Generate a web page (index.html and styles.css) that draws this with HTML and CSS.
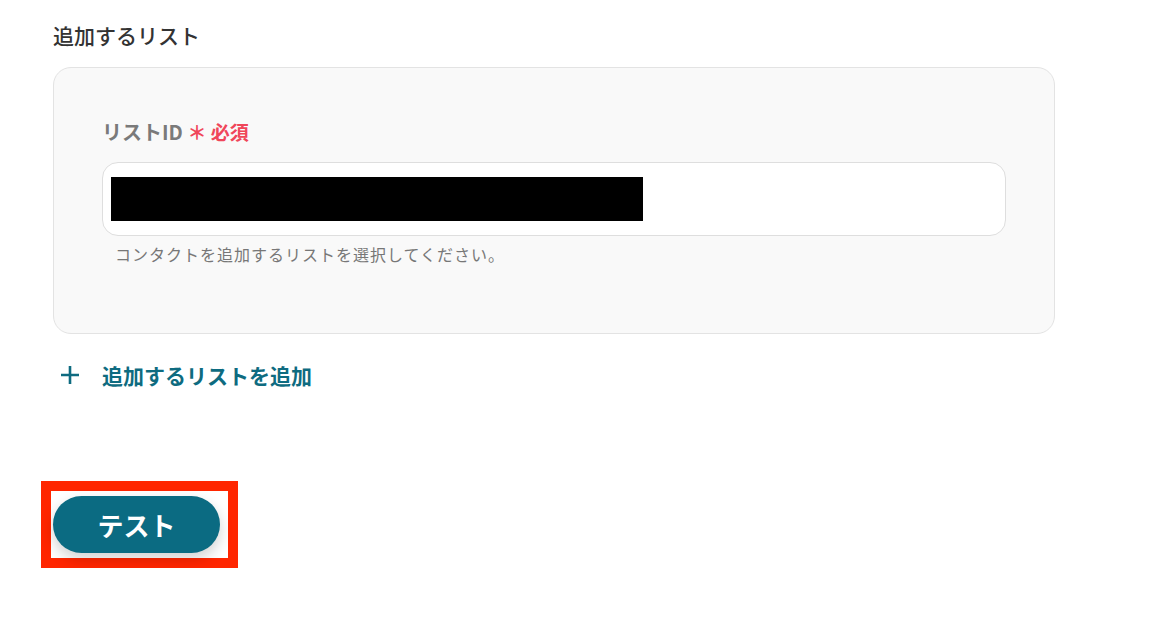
FILE: index.html
```html
<!DOCTYPE html>
<html lang="ja">

<head>
    <meta charset="UTF-8">
    <title>追加するリスト</title>
    <link rel="stylesheet" href="styles.css">
</head>

<body>

    <main class="form">

        <h2 class="rubrik">追加するリスト</h2>

        <section class="kort">
            <div class="felt">
                <label class="etiket">リストID <span class="krav">＊ 必須</span></label>
                <div class="input">
                    <span class="sort"></span>
                </div>
                <p class="hjaelp">コンタクトを追加するリストを選択してください。</p>
            </div>
        </section>

        <a class="tilfoej" href="">
            <svg width="20" height="20" viewBox="0 0 20 20">
                <path d="M10 1 V19 M1 10 H19" stroke="#0e6b80" stroke-width="2.6" fill="none" />
            </svg>
            <span>追加するリストを追加</span>
        </a>

        <div class="markering">
            <button class="test">テスト</button>
        </div>

    </main>

</body></html>
```

FILE: styles.css
```css
body {
    margin: 0;
    background-color: #fff;
    font-family: "Noto Sans CJK JP", "Noto Sans", sans-serif;
}

.form {
    padding: 21px 0 0 53px;
    width: 1002px;
}

.rubrik {
    margin: 0;
    font-size: 21px;
    line-height: 28px;
    font-weight: 500;
    color: #333;
}

.kort {
    margin-top: 18px;
    border: 1px solid #e3e3e3;
    border-radius: 18px;
    background-color: #f9f9f9;
    padding: 51px 48px 68px 48px;
}

.etiket {
    display: block;
    font-size: 20px;
    line-height: 26px;
    font-weight: 700;
    color: #7a7a7a;
}

.krav {
    font-size: 19px;
    color: #f0465a;
    margin-left: 0;
}

.input {
    margin-top: 17px;
    height: 72px;
    border: 1px solid #dedede;
    border-radius: 16px;
    background-color: #fff;
    display: flex;
    align-items: center;
    padding-left: 8px;
}

.sort {
    width: 532px;
    height: 44px;
    background-color: #000;
}

.hjaelp {
    margin: 7px 0 0 13px;
    font-size: 16px;
    line-height: 22px;
    letter-spacing: 1px;
    color: #777;
}

.tilfoej {
    display: flex;
    align-items: center;
    margin-top: 27px;
    text-decoration: none;
    color: #0e6b80;
    font-size: 21px;
    line-height: 28px;
    font-weight: 700;
}

.tilfoej svg {
    margin-left: 7px;
    margin-right: 22px;
}

.markering {
    display: inline-block;
    margin: 92px 0 0 -12px;
    border: 10px solid #ff2600;
    padding: 5px 8px 5px 2px;
}

.test {
    display: block;
    width: 167px;
    height: 57px;
    border: none;
    border-radius: 29px;
    background-color: #0b6b82;
    color: #fff;
    font-family: "Noto Sans CJK JP", sans-serif;
    font-size: 26px;
    font-weight: 700;
    box-shadow: 0 6px 14px rgba(0, 0, 0, 0.18);
    cursor: pointer;
}
```
